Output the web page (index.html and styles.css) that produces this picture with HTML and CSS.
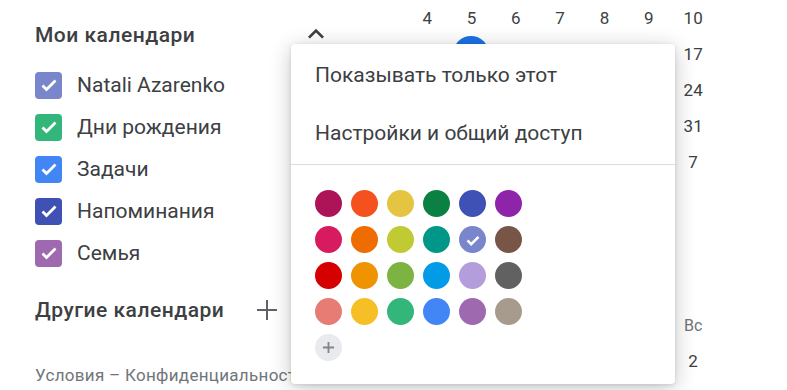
FILE: index.html
```html
<!DOCTYPE html>
<html lang="ru">
<head>
    <meta charset="UTF-8">
    <meta name="viewport" content="width=device-width, initial-scale=1.0">
    <title>Календарь</title>
    <link rel="stylesheet" href="styles.css">
</head>
<body>
    <div class="sidebar">
        <div class="section-head">
            <span>Мои календари</span>
            <svg class="chevron" viewBox="0 0 24 24" width="32" height="32"><path d="M12 8l-6 6 1.41 1.41L12 10.83l4.59 4.58L18 14z"/></svg>
        </div>
        <ul class="cal-list">
            <li><span class="box c-lavender"><svg viewBox="0 0 24 24"><path d="M5.5 12.5l4 4 9-9" /></svg></span>Natali Azarenko</li>
            <li><span class="box c-sage"><svg viewBox="0 0 24 24"><path d="M5.5 12.5l4 4 9-9" /></svg></span>Дни рождения</li>
            <li><span class="box c-blue"><svg viewBox="0 0 24 24"><path d="M5.5 12.5l4 4 9-9" /></svg></span>Задачи</li>
            <li><span class="box c-indigo"><svg viewBox="0 0 24 24"><path d="M5.5 12.5l4 4 9-9" /></svg></span>Напоминания</li>
            <li><span class="box c-grape"><svg viewBox="0 0 24 24"><path d="M5.5 12.5l4 4 9-9" /></svg></span>Семья</li>
        </ul>
        <div class="section-head other">
            <span>Другие календари</span>
            <svg class="plus" viewBox="0 0 22 22" width="22" height="22"><path d="M11 1v20M1 11h20"/></svg>
        </div>
        <div class="footer">Условия – Конфиденциальность</div>
    </div>

    <div class="calendar">
        <div class="month">
            <span></span><span></span><span></span><span></span><span class="selected"></span><span></span><span></span>
            <span>4</span><span>5</span><span>6</span><span>7</span><span>8</span><span>9</span><span>10</span>
            <span>11</span><span class="today">12</span><span>13</span><span>14</span><span>15</span><span>16</span><span>17</span>
            <span>18</span><span>19</span><span>20</span><span>21</span><span>22</span><span>23</span><span>24</span>
            <span>25</span><span>26</span><span>27</span><span>28</span><span>29</span><span>30</span><span>31</span>
            <span>1</span><span>2</span><span>3</span><span>4</span><span>5</span><span>6</span><span>7</span>
        </div>
        <div class="month-title">Июнь 2019</div>
        <div class="month">
            <span class="wd">Пн</span><span class="wd">Вт</span><span class="wd">Ср</span><span class="wd">Чт</span><span class="wd">Пт</span><span class="wd">Сб</span><span class="wd">Вс</span>
            <span>27</span><span>28</span><span>29</span><span>30</span><span>31</span><span>1</span><span>2</span>
        </div>
    </div>

    <div class="menu">
        <div class="menu-item">Показывать только этот</div>
        <div class="menu-item">Настройки и общий доступ</div>
        <div class="divider"></div>
        <div class="swatches">
            <span style="background:#ad1457"></span>
            <span style="background:#f4511e"></span>
            <span style="background:#e4c441"></span>
            <span style="background:#0b8043"></span>
            <span style="background:#3f51b5"></span>
            <span style="background:#8e24aa"></span>
            <span style="background:#d81b60"></span>
            <span style="background:#ef6c00"></span>
            <span style="background:#c0ca33"></span>
            <span style="background:#009688"></span>
            <span class="checked" style="background:#7986cb"><svg viewBox="0 0 24 24"><path d="M6 12.5l4 4 8-8" /></svg></span>
            <span style="background:#795548"></span>
            <span style="background:#d50000"></span>
            <span style="background:#f09300"></span>
            <span style="background:#7cb342"></span>
            <span style="background:#039be5"></span>
            <span style="background:#b39ddb"></span>
            <span style="background:#616161"></span>
            <span style="background:#e67c73"></span>
            <span style="background:#f6bf26"></span>
            <span style="background:#33b679"></span>
            <span style="background:#4285f4"></span>
            <span style="background:#9e69af"></span>
            <span style="background:#a79b8e"></span>
            <span class="add"><svg viewBox="0 0 14 14"><path d="M7 1v12M1 7h12"/></svg></span>
        </div>
    </div>
</body>
</html>
```

FILE: styles.css
```css
body {
    margin: 0;
    width: 787px;
    height: 390px;
    overflow: hidden;
    background-color: #fff;
    font-family: Roboto, Arial, sans-serif;
    color: #3c4043;
    display: flex;
    position: relative;
}

.sidebar {
    width: 345px;
    flex-shrink: 0;
    box-sizing: border-box;
    padding: 14px 0 0 35px;
}

.section-head {
    height: 42px;
    display: flex;
    align-items: center;
    justify-content: space-between;
    padding-right: 13px;
    font-size: 21px;
    font-weight: 500;
    letter-spacing: 0.5px;
}

.chevron {
    fill: #3c4043;
    margin-top: -2px;
}

.section-head.other {
    margin-top: 15px;
    padding-right: 67px;
}

.plus {
    stroke: #5f6368;
    stroke-width: 2;
    fill: none;
}

.cal-list {
    list-style: none;
    margin: 8px 0 0;
    padding: 0;
}

.cal-list li {
    height: 42px;
    display: flex;
    align-items: center;
    font-size: 21px;
}

.box {
    width: 27px;
    height: 27px;
    border-radius: 4px;
    margin-right: 15px;
    display: flex;
    align-items: center;
    justify-content: center;
}

.box svg {
    width: 24px;
    height: 24px;
    fill: none;
    stroke: #fff;
    stroke-width: 2.8;
}

.c-lavender { background-color: #7986cb; }
.c-sage { background-color: #33b679; }
.c-blue { background-color: #4285f4; }
.c-indigo { background-color: #3f51b5; }
.c-grape { background-color: #9e69af; }

.footer {
    margin-top: 32px;
    height: 24px;
    line-height: 24px;
    font-size: 17px;
    letter-spacing: 0.3px;
    color: #70757a;
    white-space: nowrap;
}

.calendar {
    margin-left: 60px;
    margin-top: -36px;
}

.month {
    display: grid;
    grid-template-columns: repeat(7, 44.33px);
    grid-auto-rows: 36px;
    font-size: 17px;
}

.month span {
    display: flex;
    align-items: center;
    justify-content: center;
    border-radius: 50%;
}

.month .selected {
    background-color: #d2e3fc;
}

.month .today {
    background-color: #1a73e8;
    color: #fff;
    width: 36px;
    height: 36px;
    justify-self: center;
}

.month .wd {
    font-size: 16px;
    color: #70757a;
}

.month-title {
    height: 127px;
    font-size: 17px;
    padding-left: 12px;
    line-height: 60px;
}

.menu {
    position: absolute;
    left: 291px;
    top: 44px;
    width: 384px;
    height: 340px;
    background-color: #fff;
    border-radius: 4px;
    box-shadow: 0 4px 22px rgba(0, 0, 0, 0.22), 0 1px 4px rgba(0, 0, 0, 0.12);
    padding-top: 2px;
    box-sizing: border-box;
}

.menu-item {
    height: 58px;
    line-height: 58px;
    padding-left: 24px;
    font-size: 21px;
}

.divider {
    height: 1px;
    margin-top: 2px;
    background-color: #dadce0;
}

.swatches {
    display: grid;
    grid-template-columns: repeat(6, 27px);
    gap: 9px;
    padding: 25px 0 0 24px;
}

.swatches span {
    width: 27px;
    height: 27px;
    border-radius: 50%;
    display: flex;
    align-items: center;
    justify-content: center;
}

.swatches svg {
    width: 22px;
    height: 22px;
    fill: none;
    stroke: #fff;
    stroke-width: 2.8;
}

.swatches .add {
    background-color: #e8eaed;
}

.swatches .add svg {
    width: 13px;
    height: 13px;
    stroke: #80868b;
    stroke-width: 2;
}
```
